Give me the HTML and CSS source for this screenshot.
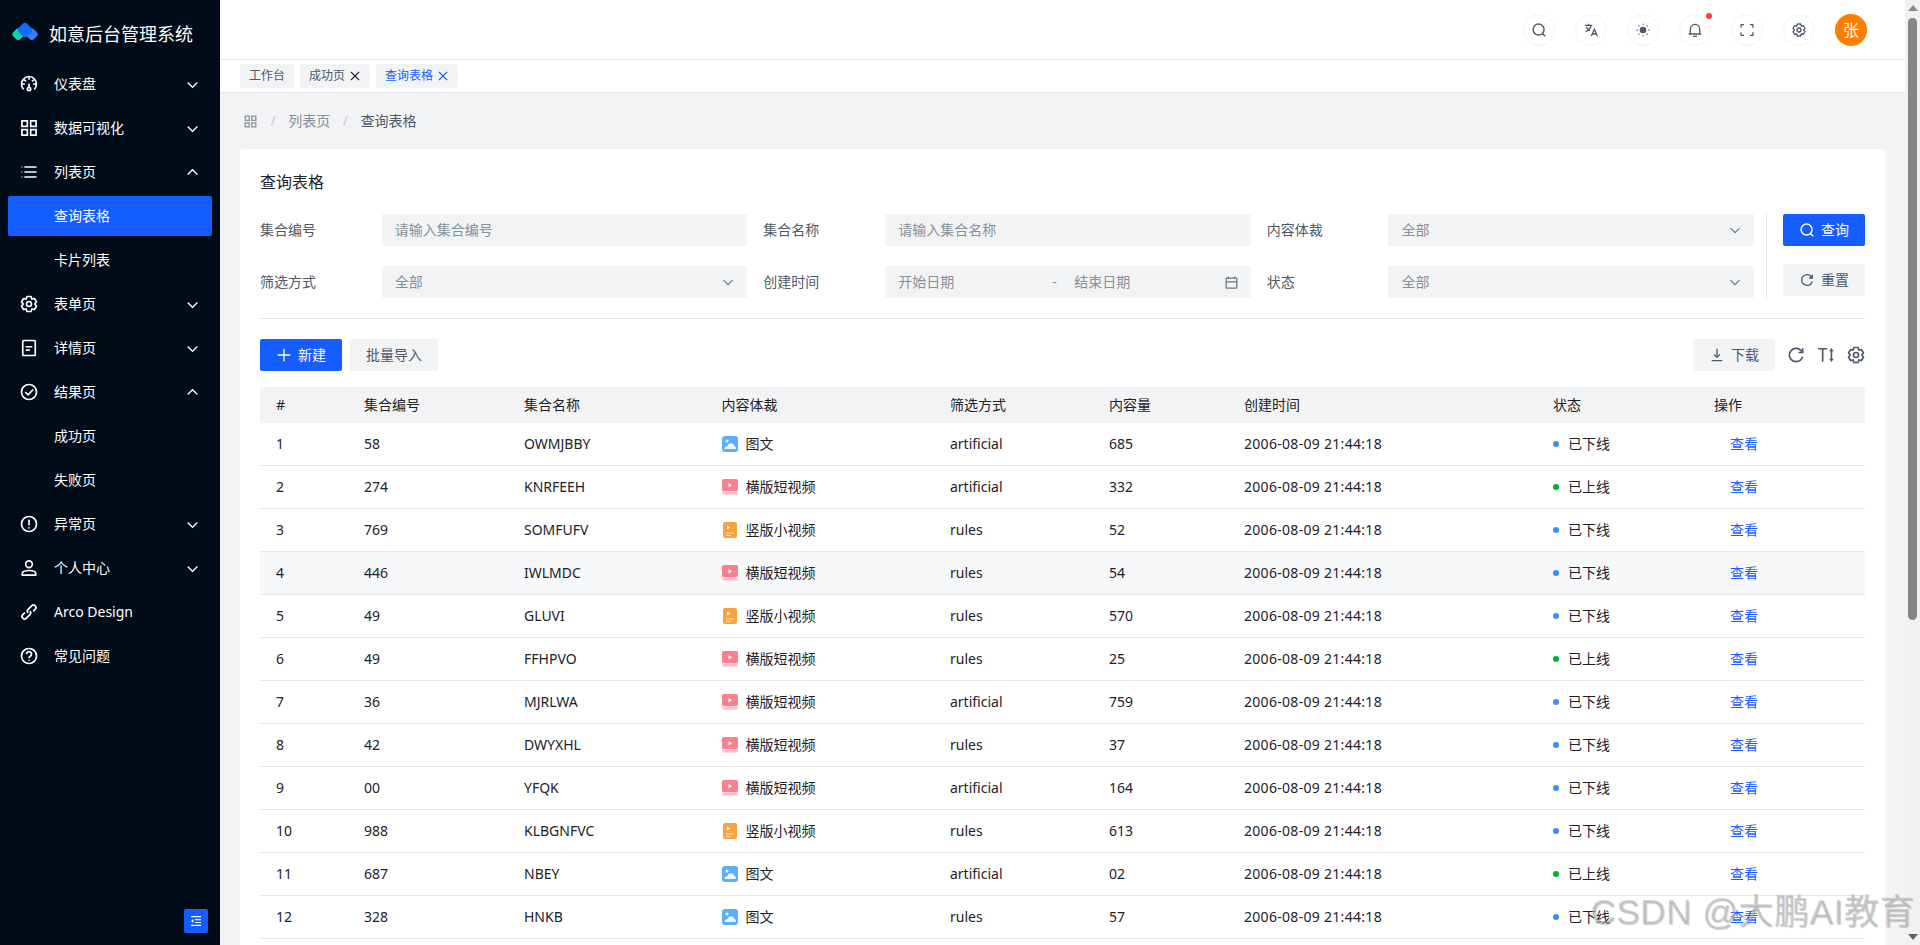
FILE: index.html
```html
<!DOCTYPE html>
<html lang="zh-CN">
<head>
<meta charset="utf-8">
<title>如意后台管理系统</title>
<link rel="stylesheet" href="styles.css">
</head>
<body>
<svg class="defs" width="0" height="0">
  <defs>
    <symbol id="i-down" viewBox="0 0 48 48"><path d="M39.6 17.443 24.043 33 8.487 17.443"/></symbol>
    <symbol id="i-up" viewBox="0 0 48 48"><path d="M39.6 30.557 24.043 15 8.487 30.557"/></symbol>
    <symbol id="i-search" viewBox="0 0 48 48"><path d="M33.072 33.072a15 15 0 1 0-21.213-21.213 15 15 0 0 0 21.213 21.213Zm0 0L40.5 40.5" transform="translate(-2 -2) scale(1.1)"/></symbol>
    <symbol id="i-close" viewBox="0 0 48 48"><path d="M9.857 9.858 24 24m0 0 14.142 14.142M24 24l14.142-14.142M24 24 9.857 38.142"/></symbol>
    <symbol id="i-gear" viewBox="0 0 48 48"><path d="M18.797 6.732A1 1 0 0 1 19.76 6h8.48a1 1 0 0 1 .964.732l1.285 4.628a1 1 0 0 0 1.213.7l4.651-1.2a1 1 0 0 1 1.116.468l4.24 7.344a1 1 0 0 1-.153 1.2L38.193 23.3a1 1 0 0 0 0 1.402l3.364 3.427a1 1 0 0 1 .153 1.2l-4.24 7.344a1 1 0 0 1-1.116.468l-4.65-1.2a1 1 0 0 0-1.214.7l-1.285 4.628a1 1 0 0 1-.964.732h-8.48a1 1 0 0 1-.963-.732L17.51 36.64a1 1 0 0 0-1.213-.7l-4.65 1.2a1 1 0 0 1-1.116-.468l-4.24-7.344a1 1 0 0 1 .153-1.2L9.809 24.7a1 1 0 0 0 0-1.402l-3.364-3.427a1 1 0 0 1-.153-1.2l4.24-7.344a1 1 0 0 1 1.116-.468l4.65 1.2a1 1 0 0 0 1.213-.7l1.286-4.628Z"/><path d="M30 24a6 6 0 1 1-12 0 6 6 0 0 1 12 0Z"/></symbol>
    <symbol id="i-refresh" viewBox="0 0 48 48"><path d="M38.837 18C36.463 12.136 30.715 8 24 8 15.163 8 8 15.163 8 24s7.163 16 16 16c7.455 0 13.72-5.1 15.496-12M40 8v10H30"/></symbol>
    <symbol id="i-doc" viewBox="0 0 48 48"><path d="M16 21h16m-16 8h10M11 6h26a2 2 0 0 1 2 2v32a2 2 0 0 1-2 2H11a2 2 0 0 1-2-2V8a2 2 0 0 1 2-2Z"/></symbol>
    <symbol id="ct-img" viewBox="0 0 16 16"><rect width="16" height="16" rx="3" fill="#5aaefb" stroke="none"/><circle cx="5" cy="5" r="1.500" fill="#fff" stroke="none"/><path d="M2.500 13c0-1.800 1.200-2.800 2.700-2.800C5.800 8.400 7.300 7.300 9 7.300s3 1.200 3.500 2.800c1.200.2 1.800 1.600 1.200 2.900z" fill="#fff" opacity=".88" stroke="none"/></symbol>
    <symbol id="ct-h" viewBox="0 0 16 16"><rect width="16" height="16" rx="2" fill="#ffd6dc" stroke="none"/><rect width="16" height="12" rx="2" fill="#fb7f8e" stroke="none"/><path d="M6.500 4v4.500L10 6.200z" fill="#fff" stroke="none"/><rect x="1" y="13.500" width="14" height="1" fill="#ffa5b0" stroke="none"/></symbol>
    <symbol id="ct-v" viewBox="0 0 16 16"><rect x="1" width="14" height="16" rx="2" fill="#f9a33f" stroke="none"/><path d="M5 3.500v4L8.500 5.500z" fill="#fff" stroke="none"/><path d="M4 10.500h8v1H4zM4 13h5v1H4z" fill="#ffe0b5" stroke="none"/></symbol>
  </defs>
</svg>

<div class="page">
  <aside class="sidebar">
    <div class="brand">
      <svg class="brand-logo" viewBox="0 0 26 18">
        <rect class="logo-green" x="1.200" y="7.200" width="10" height="10" rx="3.200" transform="rotate(45 6.200 12.200)"/>
        <rect class="logo-blue" x="14.800" y="7.200" width="10" height="10" rx="3.200" transform="rotate(45 19.800 12.200)"/>
        <rect class="logo-light" x="7" y="2" width="12" height="12" rx="3.500" transform="rotate(45 13 8)"/>
      </svg>
      <span class="brand-name">如意后台管理系统</span>
    </div>
    <nav class="menu">
      <a class="menu-item"><svg class="menu-icon" viewBox="0 0 48 48"><path d="M41.800 24c.1 4.600-1.500 9.300-5.200 13M41.800 24h-8.300M41.800 24c-.1-4.400-1.800-8.700-4.600-12M24 6c5.500 0 10.100 2.400 13.200 6M24 6c-5.700 0-10.400 2.600-13.500 6.400M24 6v7.500M37.200 12 31 17.500M10.500 12.400 17 17.500M10.500 12.400C7 16.700 5.400 22.500 6.500 28M6.300 24h8M6.500 28c.5 3.500 2 6.500 4.500 9M24 40a4 4 0 1 0 0-8 4 4 0 0 0 0 8ZM24 32v-9"/></svg><span class="menu-text">仪表盘</span><svg class="chev"><use href="#i-down"/></svg></a>
      <a class="menu-item"><svg class="menu-icon" viewBox="0 0 48 48"><path d="M7 7h13v13H7zM28 7h13v13H28zM7 28h13v13H7zM28 28h13v13H28z"/></svg><span class="menu-text">数据可视化</span><svg class="chev"><use href="#i-down"/></svg></a>
      <a class="menu-item"><svg class="menu-icon" viewBox="0 0 48 48"><path d="M13 12h29M13 24h29M13 36h29M6 12h2M6 24h2M6 36h2"/></svg><span class="menu-text">列表页</span><svg class="chev"><use href="#i-up"/></svg></a>
      <a class="menu-item sub active"><span class="menu-text">查询表格</span></a>
      <a class="menu-item sub"><span class="menu-text">卡片列表</span></a>
      <a class="menu-item"><svg class="menu-icon"><use href="#i-gear"/></svg><span class="menu-text">表单页</span><svg class="chev"><use href="#i-down"/></svg></a>
      <a class="menu-item"><svg class="menu-icon"><use href="#i-doc"/></svg><span class="menu-text">详情页</span><svg class="chev"><use href="#i-down"/></svg></a>
      <a class="menu-item"><svg class="menu-icon" viewBox="0 0 48 48"><circle cx="24" cy="24" r="18"/><path d="m15 24 7 7 12-13"/></svg><span class="menu-text">结果页</span><svg class="chev"><use href="#i-up"/></svg></a>
      <a class="menu-item sub"><span class="menu-text">成功页</span></a>
      <a class="menu-item sub"><span class="menu-text">失败页</span></a>
      <a class="menu-item"><svg class="menu-icon" viewBox="0 0 48 48"><circle cx="24" cy="24" r="18"/><path d="M24 14v13M24 32v2.500"/></svg><span class="menu-text">异常页</span><svg class="chev"><use href="#i-down"/></svg></a>
      <a class="menu-item"><svg class="menu-icon" viewBox="0 0 48 48"><circle cx="24" cy="15" r="8"/><path d="M8 37c0-5 5-7 16-7s16 2 16 7v4H8z"/></svg><span class="menu-text">个人中心</span><svg class="chev"><use href="#i-down"/></svg></a>
      <a class="menu-item"><svg class="menu-icon" viewBox="0 0 48 48"><path d="m14.100 25.414-4.950 4.950a6 6 0 0 0 8.486 8.485l8.485-8.485a6 6 0 0 0 0-8.485m7.779.707 4.950-4.950a6 6 0 1 0-8.486-8.485l-8.485 8.485a6 6 0 0 0 0 8.485"/></svg><span class="menu-text">Arco Design</span></a>
      <a class="menu-item"><svg class="menu-icon" viewBox="0 0 48 48"><circle cx="24" cy="24" r="18"/><path d="M18 19.500a6 6 0 1 1 9 5.200c-2 1.200-3 2.300-3 4.800M24 33v2.500"/></svg><span class="menu-text">常见问题</span></a>
    </nav>
    <div class="collapse-btn"><svg viewBox="0 0 48 48"><path d="M7 9h34M21 19h20M21 29h20M7 39h34"/><path class="fill" d="M15 17v14l-8-7z"/></svg></div>
  </aside>

  <div class="main">
    <header class="navbar">
      <button class="nav-btn"><svg class="ico"><use href="#i-search"/></svg></button>
      <button class="nav-btn"><svg class="ico" viewBox="0 0 48 48"><path d="M6 10h22M17 5v5M24 10c-1 8-7 15-16 19M10 15c2 5 6 9 11 11"/><path d="m25 42 9-20 9 20M28 36h12"/></svg></button>
      <button class="nav-btn"><svg class="ico" viewBox="0 0 48 48"><circle class="fill" cx="24" cy="24" r="10"/><path d="M24 5v3M24 40v3M5 24h3M40 24h3M10.500 10.500l2.500 2.500M35 35l2.500 2.500M37.500 10.500 35 13M13 35l-2.500 2.500"/></svg></button>
      <button class="nav-btn has-dot"><svg class="ico" viewBox="0 0 48 48"><path d="M10 36V21a14 14 0 0 1 28 0v15M5 36h38M24 7V5M18 43h12"/></svg></button>
      <button class="nav-btn"><svg class="ico" viewBox="0 0 48 48"><path d="M42 17V9a1 1 0 0 0-1-1h-8M6 17V9a1 1 0 0 1 1-1h8M42 31v8a1 1 0 0 1-1 1h-8M6 31v8a1 1 0 0 0 1 1h8"/></svg></button>
      <button class="nav-btn"><svg class="ico"><use href="#i-gear"/></svg></button>
      <div class="avatar">张</div>
    </header>

    <div class="tabs">
      <span class="tag">工作台</span>
      <span class="tag">成功页<svg class="tag-x"><use href="#i-close"/></svg></span>
      <span class="tag current">查询表格<svg class="tag-x"><use href="#i-close"/></svg></span>
    </div>

    <main class="content">
      <div class="crumbs">
        <svg class="crumb-home" viewBox="0 0 48 48"><path d="M7 7h13v13H7zM28 7h13v13H28zM7 28h13v13H7zM28 28h13v13H28z"/></svg>
        <span class="crumb-sep">/</span>
        <span class="crumb">列表页</span>
        <span class="crumb-sep">/</span>
        <span class="crumb last">查询表格</span>
      </div>

      <section class="card">
        <h2 class="card-title">查询表格</h2>
        <div class="filter">
          <div class="form-grid">
            <label class="field"><span class="label">集合编号</span><span class="control ph">请输入集合编号</span></label>
            <label class="field"><span class="label">集合名称</span><span class="control ph">请输入集合名称</span></label>
            <label class="field"><span class="label">内容体裁</span><span class="control ph">全部<svg class="sel"><use href="#i-down"/></svg></span></label>
            <label class="field"><span class="label">筛选方式</span><span class="control ph">全部<svg class="sel"><use href="#i-down"/></svg></span></label>
            <label class="field"><span class="label">创建时间</span><span class="control ph range"><span class="range-a">开始日期</span><span class="range-sep">-</span><span class="range-b">结束日期</span><svg class="cal" viewBox="0 0 48 48"><path d="M7 22h34M14 5v8M34 5v8M8 10h32a1 1 0 0 1 1 1v30a1 1 0 0 1-1 1H8a1 1 0 0 1-1-1V11a1 1 0 0 1 1-1Z"/></svg></span></label>
            <label class="field"><span class="label">状态</span><span class="control ph">全部<svg class="sel"><use href="#i-down"/></svg></span></label>
          </div>
          <div class="filter-actions">
            <button class="btn primary"><svg class="btn-ico"><use href="#i-search"/></svg>查询</button>
            <button class="btn"><svg class="btn-ico"><use href="#i-refresh"/></svg>重置</button>
          </div>
        </div>
        <div class="divider"></div>
        <div class="toolbar">
          <button class="btn primary"><svg class="btn-ico" viewBox="0 0 48 48"><path d="M5 24h38M24 5v38"/></svg>新建</button>
          <button class="btn">批量导入</button>
          <span class="spacer"></span>
          <button class="btn"><svg class="btn-ico" viewBox="0 0 48 48"><path d="m33.072 22.071-9.070 9.071-9.072-9.070M24 5v26M40 41H8"/></svg>下载</button>
          <svg class="tool-ico"><use href="#i-refresh"/></svg>
          <svg class="tool-ico" viewBox="0 0 48 48"><path d="M5 9h22M16 9v31M37 13v22"/><path class="fill" d="M37 7l5.500 8h-11zM37 41l-5.500-8h11z"/></svg>
          <svg class="tool-ico"><use href="#i-gear"/></svg>
        </div>
        <table class="table">
          <colgroup><col class="c1"><col class="c2"><col class="c3"><col class="c4"><col class="c5"><col class="c6"><col class="c7"><col class="c8"><col class="c9"></colgroup>
          <thead><tr><th>#</th><th>集合编号</th><th>集合名称</th><th>内容体裁</th><th>筛选方式</th><th>内容量</th><th>创建时间</th><th>状态</th><th>操作</th></tr></thead>
          <tbody>
            <tr><td>1</td><td>58</td><td>OWMJBBY</td><td><span class="ct"><svg class="ct-ico"><use href="#ct-img"/></svg>图文</span></td><td>artificial</td><td>685</td><td class="date">2006-08-09 21:44:18</td><td><span class="st off">已下线</span></td><td><a class="link">查看</a></td></tr>
            <tr><td>2</td><td>274</td><td>KNRFEEH</td><td><span class="ct"><svg class="ct-ico"><use href="#ct-h"/></svg>横版短视频</span></td><td>artificial</td><td>332</td><td class="date">2006-08-09 21:44:18</td><td><span class="st on">已上线</span></td><td><a class="link">查看</a></td></tr>
            <tr><td>3</td><td>769</td><td>SOMFUFV</td><td><span class="ct"><svg class="ct-ico"><use href="#ct-v"/></svg>竖版小视频</span></td><td>rules</td><td>52</td><td class="date">2006-08-09 21:44:18</td><td><span class="st off">已下线</span></td><td><a class="link">查看</a></td></tr>
            <tr class="hover"><td>4</td><td>446</td><td>IWLMDC</td><td><span class="ct"><svg class="ct-ico"><use href="#ct-h"/></svg>横版短视频</span></td><td>rules</td><td>54</td><td class="date">2006-08-09 21:44:18</td><td><span class="st off">已下线</span></td><td><a class="link">查看</a></td></tr>
            <tr><td>5</td><td>49</td><td>GLUVI</td><td><span class="ct"><svg class="ct-ico"><use href="#ct-v"/></svg>竖版小视频</span></td><td>rules</td><td>570</td><td class="date">2006-08-09 21:44:18</td><td><span class="st off">已下线</span></td><td><a class="link">查看</a></td></tr>
            <tr><td>6</td><td>49</td><td>FFHPVO</td><td><span class="ct"><svg class="ct-ico"><use href="#ct-h"/></svg>横版短视频</span></td><td>rules</td><td>25</td><td class="date">2006-08-09 21:44:18</td><td><span class="st on">已上线</span></td><td><a class="link">查看</a></td></tr>
            <tr><td>7</td><td>36</td><td>MJRLWA</td><td><span class="ct"><svg class="ct-ico"><use href="#ct-h"/></svg>横版短视频</span></td><td>artificial</td><td>759</td><td class="date">2006-08-09 21:44:18</td><td><span class="st off">已下线</span></td><td><a class="link">查看</a></td></tr>
            <tr><td>8</td><td>42</td><td>DWYXHL</td><td><span class="ct"><svg class="ct-ico"><use href="#ct-h"/></svg>横版短视频</span></td><td>rules</td><td>37</td><td class="date">2006-08-09 21:44:18</td><td><span class="st off">已下线</span></td><td><a class="link">查看</a></td></tr>
            <tr><td>9</td><td>00</td><td>YFQK</td><td><span class="ct"><svg class="ct-ico"><use href="#ct-h"/></svg>横版短视频</span></td><td>artificial</td><td>164</td><td class="date">2006-08-09 21:44:18</td><td><span class="st off">已下线</span></td><td><a class="link">查看</a></td></tr>
            <tr><td>10</td><td>988</td><td>KLBGNFVC</td><td><span class="ct"><svg class="ct-ico"><use href="#ct-v"/></svg>竖版小视频</span></td><td>rules</td><td>613</td><td class="date">2006-08-09 21:44:18</td><td><span class="st off">已下线</span></td><td><a class="link">查看</a></td></tr>
            <tr><td>11</td><td>687</td><td>NBEY</td><td><span class="ct"><svg class="ct-ico"><use href="#ct-img"/></svg>图文</span></td><td>artificial</td><td>02</td><td class="date">2006-08-09 21:44:18</td><td><span class="st on">已上线</span></td><td><a class="link">查看</a></td></tr>
            <tr><td>12</td><td>328</td><td>HNKB</td><td><span class="ct"><svg class="ct-ico"><use href="#ct-img"/></svg>图文</span></td><td>rules</td><td>57</td><td class="date">2006-08-09 21:44:18</td><td><span class="st off">已下线</span></td><td><a class="link">查看</a></td></tr>
          </tbody>
        </table>
      </section>
    </main>
  </div>

  <div class="scrollbar">
    <span class="sb-arrow up"></span>
    <span class="sb-thumb"></span>
    <span class="sb-arrow down"></span>
  </div>
</div>

<div class="watermark">CSDN @大鹏AI教育</div>
</body>
</html>
```

FILE: styles.css
```css
* { box-sizing: border-box; }
html, body { margin: 0; height: 100%; overflow: hidden; }
body {
  font-family: "Noto Sans", "Noto Sans CJK SC", sans-serif;
  font-size: 14px;
  line-height: 20px;
  color: #1d2129;
  background: #f2f3f5;
}
.defs { position: absolute; }
svg { fill: none; stroke: currentColor; stroke-width: 4; flex: none; }
.fill { fill: currentColor; stroke: none; }

.page { display: flex; height: 945px; }

/* sidebar */
.sidebar { width: 220px; flex: none; background: #000c17; color: #fff; display: flex; flex-direction: column; position: relative; }
.brand { height: 60px; display: flex; align-items: center; padding: 7px 0 0 12px; gap: 11px; }
.brand-logo { width: 26px; height: 18px; margin-top: -6px; stroke: none; }
.logo-blue { fill: #3c7ef5; stroke: none; }
.logo-green { fill: #12d2ac; stroke: none; }
.logo-light { fill: #0f6cff; stroke: none; }
.brand-name { font-size: 18px; line-height: 26px; }
.menu { padding: 4px 8px; display: flex; flex-direction: column; gap: 4px; }
.menu-item { height: 40px; display: flex; align-items: center; padding: 0 12px 0 11px; border-radius: 2px; color: #fff; }
.menu-icon { width: 20px; height: 20px; margin-right: 15px; stroke: #fff; }
.menu-text { flex: 1; line-height: 20px; }
.menu-item.sub { padding-left: 46px; }
.menu-item.active { background: #165dff; }
.chev { width: 15px; height: 15px; stroke: #fff; }
.collapse-btn { position: absolute; left: 184px; top: 909px; width: 24px; height: 24px; border-radius: 2px; background: #165dff; display: flex; align-items: center; justify-content: center; color: #fff; }
.collapse-btn svg { width: 14px; height: 14px; }

/* main */
.main { flex: 1; min-width: 0; display: flex; flex-direction: column; }
.navbar { height: 60px; background: #fff; border-bottom: 1px solid #e5e6eb; display: flex; align-items: center; justify-content: flex-end; gap: 20px; padding: 0 38px 0 0; flex: none; }
.nav-btn { width: 32px; height: 32px; border-radius: 50%; border: 1px solid #f2f3f5; background: #fff; color: #4e5969; display: flex; align-items: center; justify-content: center; padding: 0; position: relative; }
.has-dot::after { content: ""; position: absolute; width: 6px; height: 6px; border-radius: 50%; background: #f53f3f; top: -2px; right: -2px; }
.ico { width: 16px; height: 16px; }
.avatar { width: 32px; height: 32px; border-radius: 50%; background: #ff7d00; color: #fff; font-size: 16px; display: flex; align-items: center; justify-content: center; }

.tabs { height: 33px; background: #fff; border-bottom: 1px solid #e5e6eb; display: flex; align-items: flex-start; gap: 6px; padding: 4px 0 0 20px; flex: none; }
.tag { height: 24px; padding: 0 9px; background: #f2f3f5; border-radius: 2px; display: flex; align-items: center; font-size: 12px; color: #4e5969; }
.tag.current { color: #165dff; }
.tag-x { width: 14px; height: 14px; margin: 0 -1px 0 3px; stroke: #1d2129; }
.tag.current .tag-x { stroke: #165dff; }

.content { flex: 1; min-height: 0; padding: 0 20px; overflow: hidden; }
.crumbs { height: 56px; display: flex; align-items: center; color: #4e5969; }
.crumb-home { width: 15px; height: 15px; color: #86909c; margin-left: 3px; }
.crumb-sep { color: #c9cdd4; margin: 0 12.5px; }
.crumb { color: #86909c; }
.crumb.last { color: #4e5969; }

.card { background: #fff; border-radius: 4px 4px 0 0; padding: 21px 20px 20px; }
.card-title { font-size: 16px; font-weight: 400; line-height: 24px; margin: 0 0 20px; color: #1d2129; }
.filter { display: flex; }
.form-grid { flex: none; width: 1494px; display: grid; grid-template-columns: repeat(3, 1fr); gap: 20px 16px; }
.field { display: grid; grid-template-columns: 25% 1fr; align-items: center; height: 32px; }
.label { color: #4e5969; }
.control { height: 32px; background: #f2f3f5; border-radius: 2px; display: flex; align-items: center; padding: 0 12px 0 13px; color: #86909c; justify-content: space-between; }
.sel { width: 14px; height: 14px; color: #6b7785; }
.range { justify-content: flex-start; padding: 0 13px; }
.range-a { width: 154px; }
.range-sep { width: 22px; }
.range-b { flex: 1; }
.cal { width: 15px; height: 15px; color: #6b7785; margin-right: -1px; }
.filter-actions { margin-left: 12px; padding-left: 16px; border-left: 1px solid #e5e6eb; display: flex; flex-direction: column; gap: 18px; height: 84px; }
.btn { height: 32px; padding: 0 16px; border: 0; border-radius: 2px; background: #f2f3f5; color: #4e5969; font: inherit; display: inline-flex; align-items: center; justify-content: center; }
.filter-actions .btn { width: 82px; }
.btn.primary { background: #165dff; color: #fff; }
.btn-ico { width: 16px; height: 16px; margin-right: 6px; }
.divider { height: 1px; background: #e5e6eb; margin: 20px 0; }
.toolbar { display: flex; align-items: center; height: 32px; margin-bottom: 16px; }
.toolbar .btn { min-width: 82px; }
.toolbar .btn + .btn { margin-left: 8px; }
.toolbar > .btn:nth-child(2) { width: 88px; }
.spacer { flex: 1; }
.tool-ico { width: 20px; height: 20px; color: #4e5969; margin-left: 10px; }
.tool-ico:last-child { margin-right: -1px; }
.btn + .tool-ico { margin-left: 11px; }

.table { width: 1605px; border-collapse: separate; border-spacing: 0; table-layout: fixed; }
.c1 { width: 88px; } .c2 { width: 160px; } .c3 { width: 197.6px; } .c4 { width: 228.4px; } .c5 { width: 159px; } .c6 { width: 135px; } .c7 { width: 309px; } .c8 { width: 161px; } .c9 { width: 167px; }
th { height: 36px; background: #f2f3f5; font-weight: 400; text-align: left; padding: 0 16px; color: #1d2129; }
td { height: 43px; padding: 0 16px; border-bottom: 1px solid #e5e6eb; color: #1d2129; }
tr.hover td { background: #f7f8fa; }
.date { letter-spacing: .3px; }
.ct { display: flex; align-items: center; }
.ct-ico { width: 16px; height: 16px; margin-right: 8px; stroke: none; }
.st { display: flex; align-items: center; }
.st::before { content: ""; width: 6px; height: 6px; border-radius: 50%; margin-right: 9px; }
.st.off::before { background: #3c8cff; }
.st.on::before { background: #00b42a; }
.link { color: #165dff; margin-left: 16px; }

/* scrollbar */
.scrollbar { width: 15px; flex: none; background: #f1f1f1; display: flex; flex-direction: column; align-items: center; position: relative; }
.sb-arrow { width: 0; height: 0; border-left: 5px solid transparent; border-right: 5px solid transparent; position: absolute; }
.sb-arrow.up { top: 5px; border-bottom: 6px solid #8a8a8a; }
.sb-arrow.down { bottom: 5px; border-top: 6px solid #5f5f5f; }
.sb-thumb { width: 9px; height: 602px; margin-top: 18px; background: #858585; border-radius: 5px; }

.watermark { position: absolute; right: 5px; bottom: 9px; font-family: "Liberation Sans", "Noto Sans CJK SC", sans-serif; font-size: 35px; line-height: 48px; color: rgba(175,175,175,.5); text-shadow: 1px 1px 1px rgba(120,120,120,.35); letter-spacing: .6px; pointer-events: none; white-space: nowrap; }
```
